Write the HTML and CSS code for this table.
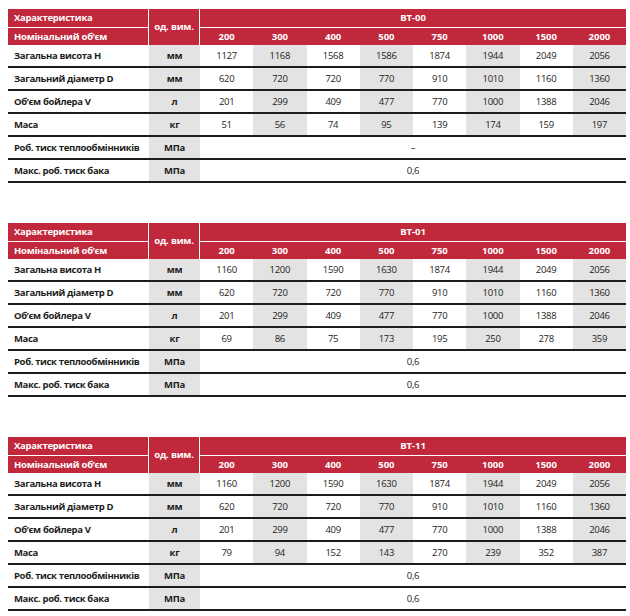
FILE: index.html
```html
<!DOCTYPE html>
<html lang="uk">
<head>
<meta charset="utf-8">
<title>Характеристики</title>
<link rel="stylesheet" href="styles.css">
</head>
<body>
<div class="page">
  <table class="spec">
    <colgroup>
      <col class="c-label"><col class="c-unit"><col class="c-val"><col class="c-val g"><col class="c-val"><col class="c-val g"><col class="c-val"><col class="c-val g"><col class="c-val"><col class="c-val g">
    </colgroup>
    <thead>
      <tr class="h1">
        <th class="hl top">Характеристика</th>
        <th class="hu" rowspan="2">од. вим.</th>
        <th class="hm top" colspan="8">BT-00</th>
      </tr>
      <tr class="h2">
        <th class="hl">Номінальний об’єм</th>
        <th>200</th><th>300</th><th>400</th><th>500</th><th>750</th><th>1000</th><th>1500</th><th>2000</th>
      </tr>
    </thead>
    <tbody>
      <tr><td class="lbl">Загальна висота H</td><td class="unit">мм</td><td>1127</td><td>1168</td><td>1568</td><td>1586</td><td>1874</td><td>1944</td><td>2049</td><td>2056</td></tr>
      <tr><td class="lbl">Загальний діаметр D</td><td class="unit">мм</td><td>620</td><td>720</td><td>720</td><td>770</td><td>910</td><td>1010</td><td>1160</td><td>1360</td></tr>
      <tr><td class="lbl">Об’єм бойлера V</td><td class="unit">л</td><td>201</td><td>299</td><td>409</td><td>477</td><td>770</td><td>1000</td><td>1388</td><td>2046</td></tr>
      <tr><td class="lbl">Маса</td><td class="unit">кг</td><td>51</td><td>56</td><td>74</td><td>95</td><td>139</td><td>174</td><td>159</td><td>197</td></tr>
      <tr><td class="lbl">Роб. тиск теплообмінників</td><td class="unit">МПа</td><td class="merged" colspan="8">–</td></tr>
      <tr><td class="lbl">Макс. роб. тиск бака</td><td class="unit">МПа</td><td class="merged" colspan="8">0,6</td></tr>
    </tbody>
  </table>

  <table class="spec">
    <colgroup>
      <col class="c-label"><col class="c-unit"><col class="c-val"><col class="c-val g"><col class="c-val"><col class="c-val g"><col class="c-val"><col class="c-val g"><col class="c-val"><col class="c-val g">
    </colgroup>
    <thead>
      <tr class="h1">
        <th class="hl top">Характеристика</th>
        <th class="hu" rowspan="2">од. вим.</th>
        <th class="hm top" colspan="8">BT-01</th>
      </tr>
      <tr class="h2">
        <th class="hl">Номінальний об’єм</th>
        <th>200</th><th>300</th><th>400</th><th>500</th><th>750</th><th>1000</th><th>1500</th><th>2000</th>
      </tr>
    </thead>
    <tbody>
      <tr><td class="lbl">Загальна висота H</td><td class="unit">мм</td><td>1160</td><td>1200</td><td>1590</td><td>1630</td><td>1874</td><td>1944</td><td>2049</td><td>2056</td></tr>
      <tr><td class="lbl">Загальний діаметр D</td><td class="unit">мм</td><td>620</td><td>720</td><td>720</td><td>770</td><td>910</td><td>1010</td><td>1160</td><td>1360</td></tr>
      <tr><td class="lbl">Об’єм бойлера V</td><td class="unit">л</td><td>201</td><td>299</td><td>409</td><td>477</td><td>770</td><td>1000</td><td>1388</td><td>2046</td></tr>
      <tr><td class="lbl">Маса</td><td class="unit">кг</td><td>69</td><td>86</td><td>75</td><td>173</td><td>195</td><td>250</td><td>278</td><td>359</td></tr>
      <tr><td class="lbl">Роб. тиск теплообмінників</td><td class="unit">МПа</td><td class="merged" colspan="8">0,6</td></tr>
      <tr><td class="lbl">Макс. роб. тиск бака</td><td class="unit">МПа</td><td class="merged" colspan="8">0,6</td></tr>
    </tbody>
  </table>

  <table class="spec">
    <colgroup>
      <col class="c-label"><col class="c-unit"><col class="c-val"><col class="c-val g"><col class="c-val"><col class="c-val g"><col class="c-val"><col class="c-val g"><col class="c-val"><col class="c-val g">
    </colgroup>
    <thead>
      <tr class="h1">
        <th class="hl top">Характеристика</th>
        <th class="hu" rowspan="2">од. вим.</th>
        <th class="hm top" colspan="8">BT-11</th>
      </tr>
      <tr class="h2">
        <th class="hl">Номінальний об’єм</th>
        <th>200</th><th>300</th><th>400</th><th>500</th><th>750</th><th>1000</th><th>1500</th><th>2000</th>
      </tr>
    </thead>
    <tbody>
      <tr><td class="lbl">Загальна висота H</td><td class="unit">мм</td><td>1160</td><td>1200</td><td>1590</td><td>1630</td><td>1874</td><td>1944</td><td>2049</td><td>2056</td></tr>
      <tr><td class="lbl">Загальний діаметр D</td><td class="unit">мм</td><td>620</td><td>720</td><td>720</td><td>770</td><td>910</td><td>1010</td><td>1160</td><td>1360</td></tr>
      <tr><td class="lbl">Об’єм бойлера V</td><td class="unit">л</td><td>201</td><td>299</td><td>409</td><td>477</td><td>770</td><td>1000</td><td>1388</td><td>2046</td></tr>
      <tr><td class="lbl">Маса</td><td class="unit">кг</td><td>79</td><td>94</td><td>152</td><td>143</td><td>270</td><td>239</td><td>352</td><td>387</td></tr>
      <tr><td class="lbl">Роб. тиск теплообмінників</td><td class="unit">МПа</td><td class="merged" colspan="8">0,6</td></tr>
      <tr><td class="lbl">Макс. роб. тиск бака</td><td class="unit">МПа</td><td class="merged" colspan="8">0,6</td></tr>
    </tbody>
  </table>
</div>
</body>
</html>
```
FILE: styles.css
```css
html, body {
  margin: 0;
  padding: 0;
  background: #ffffff;
}

.page {
  display: flex;
  flex-direction: column;
  gap: 40px;
  padding: 9px 4px 0 8px;
  font-family: "Open Sans", "Liberation Sans", sans-serif;
  color: #1d1d1b;
}

.spec {
  width: 618px;
  table-layout: fixed;
  border-collapse: separate;
  border-spacing: 0;
  font-size: 9.5px;
}

.c-label { width: 141px; }
.c-unit { width: 51px; }
.c-val { width: 53.25px; }
.g { background: #e3e3e3; }

.spec th {
  background: #c1283b;
  color: #ffffff;
  font-weight: 700;
  padding: 0;
  text-align: center;
  vertical-align: middle;
  line-height: 12px;
}

.h1 th { height: 18px; }
.h2 th { height: 17px; }

.spec th.hl {
  text-align: left;
  padding-left: 6px;
  border-right: 1px solid #ffffff;
  letter-spacing: -0.25px;
}

.spec th.top {
  border-bottom: 1px solid #ffffff;
}

.spec th.hu {
  border-right: 1px solid #ffffff;
  letter-spacing: -0.2px;
}

.spec td {
  height: 21px;
  padding: 0;
  text-align: center;
  vertical-align: middle;
  border-bottom: 2px solid #1d1d1b;
  line-height: 12px;
  letter-spacing: -0.3px;
}

.spec td.lbl {
  text-align: left;
  padding-left: 6px;
  font-weight: 700;
  letter-spacing: -0.35px;
  background: #ffffff;
}

.spec td.unit {
  font-weight: 700;
  background: #e3e3e3;
}

.spec td.merged {
  background: #ffffff;
}
```
